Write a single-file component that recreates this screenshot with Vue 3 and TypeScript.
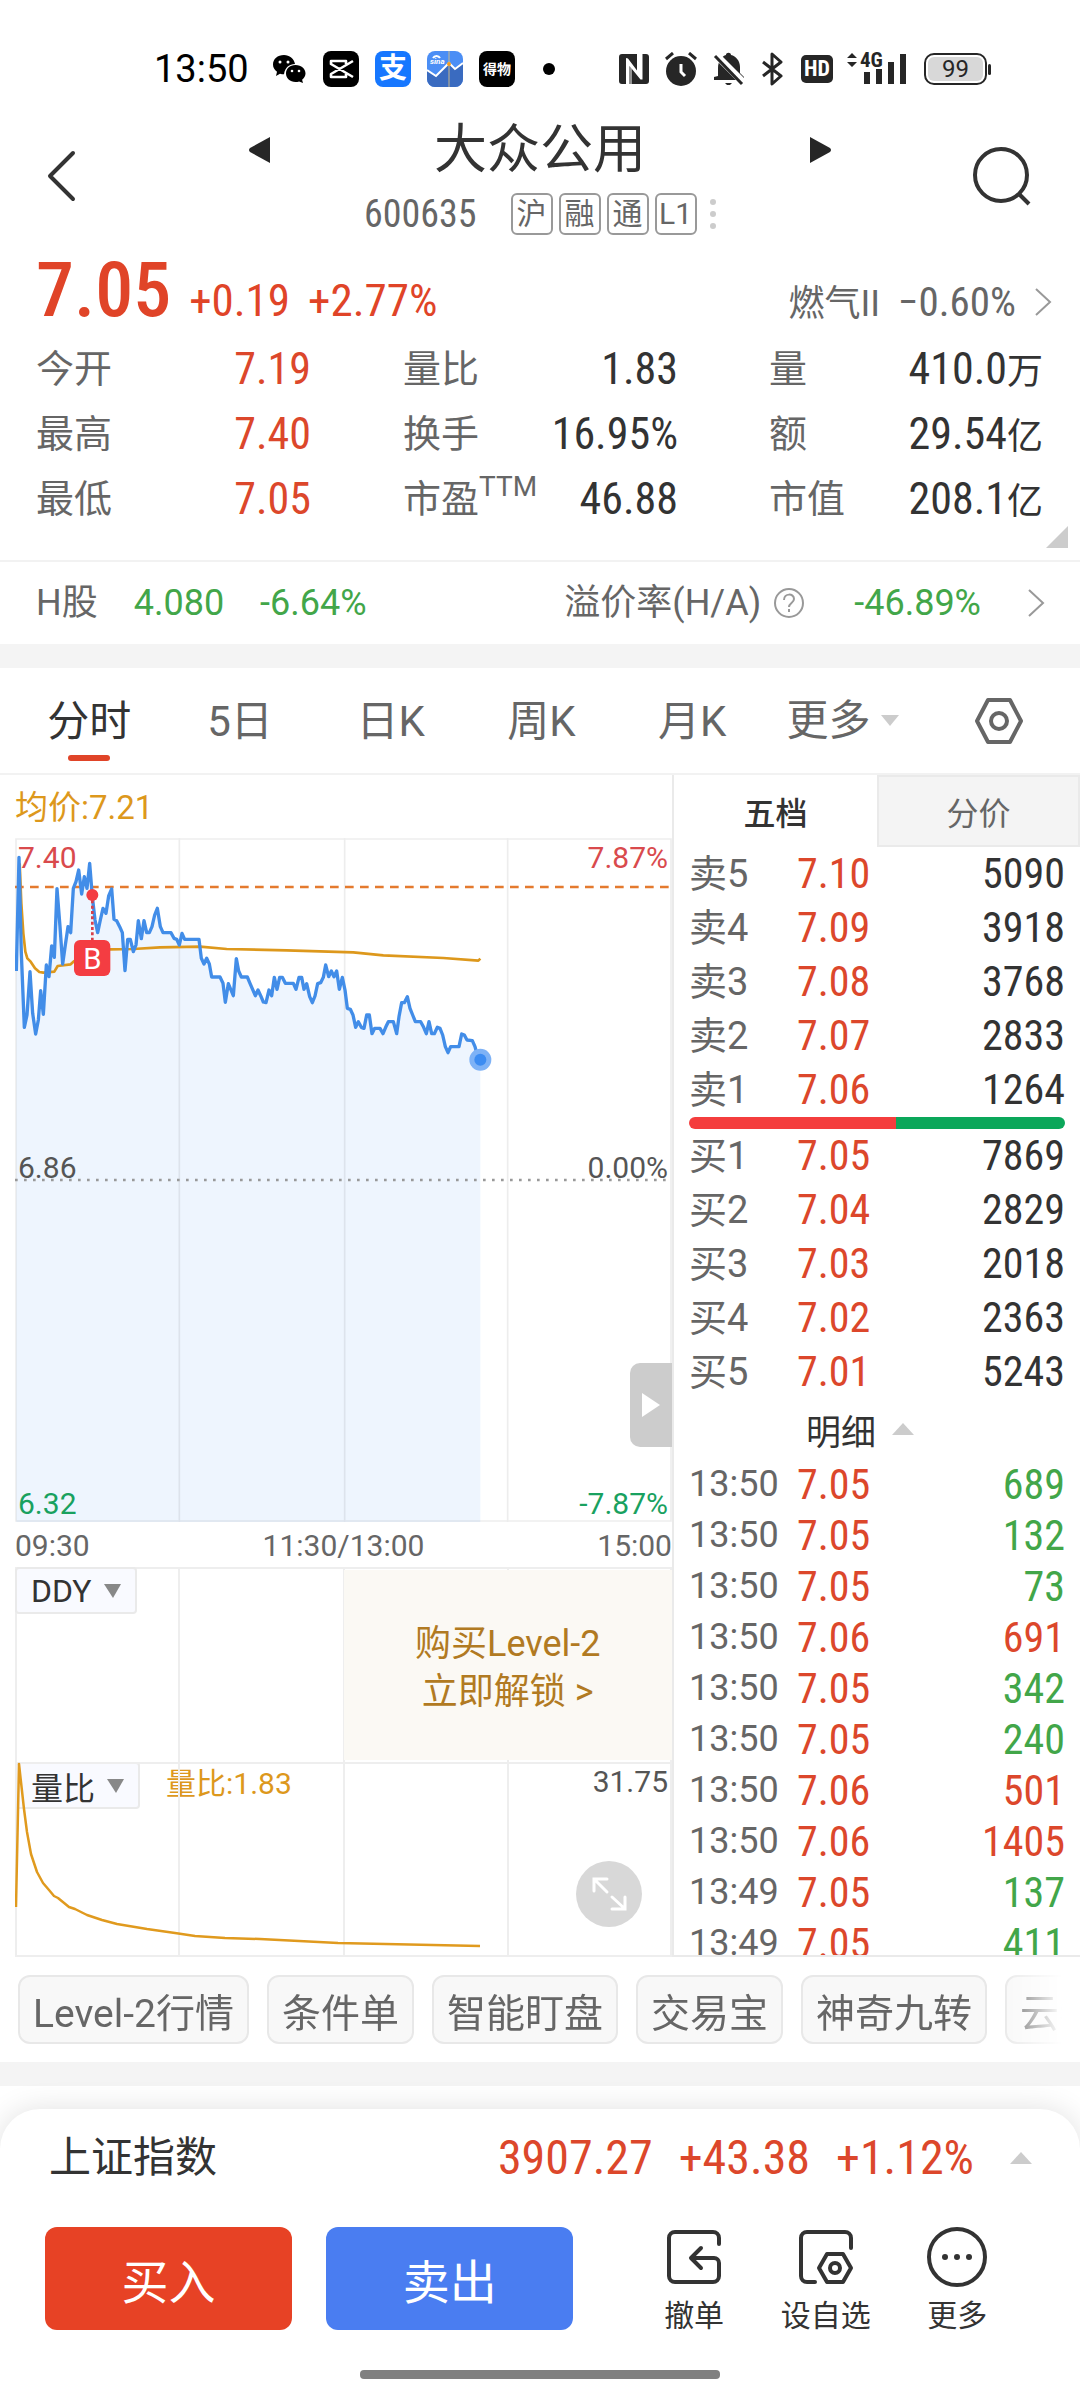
<script setup lang="ts">
interface Stat { label: string; sup?: string; value: string; unit?: string; up?: boolean }
interface Level { side: string; price: string; volume: string }
interface Tick { time: string; price: string; volume: string; up: boolean }

const stats: Stat[] = [
  { label: '今开', value: '7.19', up: true },
  { label: '量比', value: '1.83' },
  { label: '量', value: '410.0', unit: '万' },
  { label: '最高', value: '7.40', up: true },
  { label: '换手', value: '16.95%' },
  { label: '额', value: '29.54', unit: '亿' },
  { label: '最低', value: '7.05', up: true },
  { label: '市盈', sup: 'TTM', value: '46.88' },
  { label: '市值', value: '208.1', unit: '亿' },
]
const badges = ['沪', '融', '通', 'L1']
const periods = ['分时', '5日', '日K', '周K', '月K']
const asks: Level[] = [
  { side: '卖5', price: '7.10', volume: '5090' },
  { side: '卖4', price: '7.09', volume: '3918' },
  { side: '卖3', price: '7.08', volume: '3768' },
  { side: '卖2', price: '7.07', volume: '2833' },
  { side: '卖1', price: '7.06', volume: '1264' },
]
const bids: Level[] = [
  { side: '买1', price: '7.05', volume: '7869' },
  { side: '买2', price: '7.04', volume: '2829' },
  { side: '买3', price: '7.03', volume: '2018' },
  { side: '买4', price: '7.02', volume: '2363' },
  { side: '买5', price: '7.01', volume: '5243' },
]
const ticks: Tick[] = [
  { time: '13:50', price: '7.05', volume: '689', up: false },
  { time: '13:50', price: '7.05', volume: '132', up: false },
  { time: '13:50', price: '7.05', volume: '73', up: false },
  { time: '13:50', price: '7.06', volume: '691', up: true },
  { time: '13:50', price: '7.05', volume: '342', up: false },
  { time: '13:50', price: '7.05', volume: '240', up: false },
  { time: '13:50', price: '7.06', volume: '501', up: true },
  { time: '13:50', price: '7.06', volume: '1405', up: true },
  { time: '13:49', price: '7.05', volume: '137', up: false },
  { time: '13:49', price: '7.05', volume: '411', up: false },
]
const tools = ['Level-2行情', '条件单', '智能盯盘', '交易宝', '神奇九转', '云参']

const priceLine = '49,453 57,112 64,400 73,622 81,585 90,455 98,580 107,642 115,600 122,512 130,583 139,435 147,470 155,378 163,412 171,206 180,320 188,432 196,375 204,320 212,338 220,205 228,185 236,150 245,222 253,170 261,205 269,130 277,230 285,300 293,338 301,300 309,265 318,280 326,228 335,207 342,298 350,302 359,320 367,338 375,452 383,358 391,358 400,395 408,375 415,302 424,356 432,302 440,338 448,338 456,320 464,285 472,265 481,320 489,338 513,338 522,355 530,358 538,375 546,340 554,358 597,358 604,415 612,432 620,415 628,432 635,471 660,471 669,490 676,547 685,491 700,527 709,416 716,453 724,471 742,471 750,490 766,527 774,510 782,527 790,546 798,548 807,510 815,527 823,472 831,508 839,472 847,472 856,490 880,490 888,508 897,472 905,472 912,508 920,491 929,530 937,548 945,528 953,491 962,488 970,472 977,435 986,470 994,453 1002,470 1010,453 1018,508 1027,472 1035,510 1042,565 1051,568 1059,585 1067,622 1075,605 1084,622 1092,625 1100,585 1108,585 1116,641 1124,625 1140,625 1149,641 1157,622 1165,605 1180,605 1190,641 1197,590 1205,548 1213,548 1222,530 1230,565 1238,585 1246,605 1262,605 1271,622 1279,641 1287,605 1295,641 1303,641 1312,622 1320,625 1328,645 1336,680 1344,698 1352,680 1377,680 1385,642 1393,645 1401,660 1417,662 1425,680 1433,710 1441,719'
const averageLine = '59,130 64,250 70,340 76,395 82,415 92,425 105,445 118,456 130,458 163,455 173,438 212,433 222,424 280,400 330,388 400,387 480,382 600,380 680,387 860,391 1060,397 1150,406 1330,414 1435,422 1441,416'
const ratioLine = '1,145 4,2 9,47 12,70 16,92 22,110 28,121 34,128 39,134 43,136 54,145 60,147 72,153 87,158 102,162 132,167 160,171 180,174 210,176 245,177 323,181 465,184'
</script>

<template>
  <div class="page">
    <div class="status">
      <span class="clock">13:50</span>
      <div class="apps">
        <svg width="36" height="36" viewBox="0 0 36 36">
          <path d="M13 4C6.500 4 2 8 2 13.500c0 3 1.500 5.500 4 7.200L5 25l4-2.300c1.300.4 2.700.5 4 .5C14 16.500 18.500 13 24 13 23 7.500 18.500 4 13 4z" fill="#000" />
          <path d="M24.500 14C18.500 14 15 17.800 15 22.500s4 8.500 9.500 8.500c1.300 0 2.500-.2 3.600-.6L32 32l-.9-3.200C33 27.300 34.500 25 34.500 22.500 34.500 17.800 30.500 14 24.500 14z" fill="#000" />
          <g fill="#fff"><circle cx="9" cy="11" r="1.500" /><circle cx="17" cy="11" r="1.500" /><circle cx="21" cy="20" r="1.300" /><circle cx="28" cy="20" r="1.300" /></g>
        </svg>
        <svg width="36" height="36" viewBox="0 0 36 36">
          <rect width="36" height="36" rx="8" fill="#000" />
          <path d="M30 10 8 23v3h15v-3M30 26 8 13v-3h15v3" fill="none" stroke="#fff" stroke-width="2.600" stroke-linejoin="round" />
        </svg>
        <span class="app alipay">支</span>
        <svg width="36" height="36" viewBox="0 0 36 36">
          <rect width="36" height="36" rx="8" fill="#4b8ef5" />
          <path d="M0 19 9 25l13-13 6 6 8-6v16a8 8 0 0 1-8 8H8a8 8 0 0 1-8-8z" fill="#3a6bc0" />
          <path d="M0 19 9 25l13-13 6 6 8-6" fill="none" stroke="#fff" stroke-width="2" />
          <path d="M22 0v36" stroke="#c9b98c" stroke-width="1" /><circle cx="22" cy="13" r="2" fill="#f39c1f" />
          <path d="M6 7a4 4 0 0 1 7 0" fill="none" stroke="#fff" stroke-width="2" />
          <text x="3" y="13" font-size="8" font-weight="700" font-style="italic" fill="#fff">sina</text>
        </svg>
        <span class="app dewu">得物</span>
        <svg width="36" height="36" viewBox="0 0 36 36"><circle cx="18" cy="18" r="6" fill="#000" /></svg>
      </div>
      <div class="signals">
        <svg width="30" height="32" viewBox="0 0 30 32">
          <path d="M3 1h15v16.500L9 5.500 7 5v26H3a3 3 0 0 1-3-3V4a3 3 0 0 1 3-3z" fill="#262626" /><path d="M10.500 31V13l11 13.500h2V1H27a3 3 0 0 1 3 3v24a3 3 0 0 1-3 3z" fill="#262626" /><path d="M12 13v18M19 1v18" stroke="#fff" stroke-width="1" />
        </svg>
        <svg width="32" height="34" viewBox="0 0 32 34"><circle cx="16" cy="19" r="15" fill="#262626" /><path d="M1 7 8 1M31 7 24 1" stroke="#262626" stroke-width="3" /><path d="M16 12v8l4 4" fill="none" stroke="#fff" stroke-width="3" /></svg>
        <svg width="32" height="34" viewBox="0 0 32 34"><path d="M5 24V16C5 9 9 4 13 3c0-3 5-3 5 0 5 1 9 6 9 12v6l4 4v3H1v-3z" fill="#262626" /><path d="M12 31h7l-2 2h-3z" fill="#262626" /><path d="m3 3 28 28" stroke="#fff" stroke-width="7" /><path d="m2 4 27 28" stroke="#262626" stroke-width="3" /></svg>
        <svg width="24" height="34" viewBox="0 0 24 34"><path d="m2 10 18 14-9 8V2l9 8L2 24" fill="none" stroke="#262626" stroke-width="3" stroke-linejoin="round" /></svg>
        <span class="hd num">HD</span>
        <svg class="cell" width="62" height="34" viewBox="0 0 62 34">
          <path d="m6 1 5 5H1zM6 15l5-5H1z" fill="#262626" /><text class="num" x="14" y="15" font-size="21" font-weight="700" fill="#262626">4G</text>
          <path d="M21 20v12M33 17v15M45 10v22M57 2v30" stroke="#262626" stroke-width="6" />
        </svg>
        <span class="battery"><span>99</span></span>
      </div>
    </div>

    <header class="header">
      <button class="icon-btn" aria-label="返回"><svg width="40" height="52" viewBox="0 0 40 52"><path d="M33 3 10 26l23 23" fill="none" stroke="#333" stroke-width="4" stroke-linecap="round" stroke-linejoin="round" /></svg></button>
      <div class="center">
        <div class="title-row">
          <button class="icon-btn" aria-label="上一只"><svg width="22" height="28" viewBox="0 0 22 28"><path d="M22 1v26L2 16q-2-2 0-4z" fill="#262626" /></svg></button>
          <h1>大众公用</h1>
          <button class="icon-btn" aria-label="下一只"><svg width="22" height="28" viewBox="0 0 22 28"><path d="M0 1v26L20 16q2-2 0-4z" fill="#262626" /></svg></button>
        </div>
        <div class="code-row">
          <span class="code num">600635</span>
          <span v-for="b in badges" :key="b" class="badge">{{ b }}</span>
          <svg width="8" height="32" viewBox="0 0 8 32"><g fill="#ccc"><circle cx="4" cy="4" r="3" /><circle cx="4" cy="16" r="3" /><circle cx="4" cy="28" r="3" /></g></svg>
        </div>
      </div>
      <button class="icon-btn" aria-label="搜索"><svg width="60" height="60" viewBox="0 0 60 60"><circle cx="29" cy="29" r="26" fill="none" stroke="#333" stroke-width="4" /><path d="m47 48 10 10" stroke="#333" stroke-width="4" /></svg></button>
    </header>

    <section class="quote">
      <div class="price-row num">
        <strong>7.05</strong><span>+0.19</span><span>+2.77%</span>
        <a href="#" class="sector"><span class="sector-name">燃气II</span><span>−0.60%</span><svg width="18" height="28" viewBox="0 0 18 28"><path d="m2 1 14 13L2 27" fill="none" stroke="#999" stroke-width="2" /></svg></a>
      </div>
      <dl class="stats">
        <div v-for="s in stats" :key="s.label">
          <dt>{{ s.label }}<sup v-if="s.sup">{{ s.sup }}</sup></dt>
          <dd class="num" :class="{ up: s.up }">{{ s.value }}<span v-if="s.unit" class="unit">{{ s.unit }}</span></dd>
        </div>
      </dl>
      <div class="corner"><svg width="22" height="22" viewBox="0 0 22 22"><path d="M22 0v22H0z" fill="#ccc" /></svg></div>
    </section>

    <a href="#" class="hshare">
      <span>H股</span><span class="down h-price">4.080</span><span class="down">-6.64%</span>
      <span class="premium">溢价率(H/A)</span>
      <svg width="32" height="32" viewBox="0 0 32 32"><circle cx="16" cy="16" r="14" fill="none" stroke="#999" stroke-width="2" /><path d="M11 13c0-7 10-7 10-1 0 4-5 4-5 8M16 22v3" fill="none" stroke="#999" stroke-width="2" /></svg>
      <span class="down h-rate">-46.89%</span>
      <svg width="18" height="28" viewBox="0 0 18 28"><path d="m2 1 14 13L2 27" fill="none" stroke="#999" stroke-width="2" /></svg>
    </a>
    <div class="band"></div>

    <nav class="periods">
      <button v-for="(p, i) in periods" :key="p" :class="{ active: i === 0 }">{{ p }}</button>
      <button class="more">更多<svg width="18" height="11" viewBox="0 0 18 11"><path d="M0 0h18l-9 11z" fill="#ccc" /></svg></button>
      <button class="config" aria-label="设置"><svg width="48" height="48" viewBox="0 0 48 48"><path d="M13 3h22l11 21-11 21H13L2 24z" fill="none" stroke="#666" stroke-width="4" stroke-linejoin="round" /><circle cx="24" cy="24" r="8" fill="none" stroke="#666" stroke-width="4" /></svg></button>
    </nav>

    <main class="market">
      <div class="charts">
        <div class="avg">均价:7.21</div>
        <div class="plot intraday">
          <svg class="canvas" viewBox="45 54 1971 2052" preserveAspectRatio="none">
            <polygon :points="'49,2106 ' + priceLine + ' 1441,2106'" fill="#eef5fe" />
            <path d="M538 54V2106M1034 54V2106M1523 54V2106M48 57H2013V2103H48z" fill="none" stroke="#000" stroke-opacity=".07" stroke-width="5" />
            <polyline :points="averageLine" fill="none" stroke="#dd981c" stroke-width="8" stroke-linejoin="round" />
            <path d="M45 201H2016" stroke="#e47a2e" stroke-width="7" stroke-dasharray="26 19" />
            <path d="M45 1080H2016" stroke="#999" stroke-width="8" stroke-dasharray="8 19" />
            <polyline :points="priceLine" fill="none" stroke="#428de8" stroke-width="10" stroke-linejoin="round" />
            <path d="M277 225V360" stroke="#d8404a" stroke-width="8" stroke-dasharray="9 7" />
            <circle cx="277" cy="225" r="18" fill="#f43d42" />
            <rect x="222" y="360" width="109" height="108" rx="18" fill="#f43d42" />
            <text x="277" y="446" text-anchor="middle" font-size="88" fill="#fff">B</text>
            <circle cx="1441" cy="719" r="33" fill="#7eb2f6" /><circle cx="1441" cy="719" r="18" fill="#3c8cf2" />
          </svg>
          <div class="scale"><span class="hi">7.40</span><span class="hi">7.87%</span></div>
          <div class="scale mid"><span>6.86</span><span>0.00%</span></div>
          <div class="scale"><span class="lo">6.32</span><span class="lo">-7.87%</span></div>
          <button class="handle" aria-label="展开"><svg width="18" height="24" viewBox="0 0 18 24"><path d="M0 0v24l18-12z" fill="#fff" /></svg></button>
        </div>
        <div class="times"><span>09:30</span><span>11:30/13:00</span><span>15:00</span></div>
        <div class="plot sub">
          <svg class="canvas" viewBox="0 0 657 195" preserveAspectRatio="none"><path d="M164 0V195M329 0V195M493 0V195M1 195V1H656V195" fill="none" stroke="#eee" stroke-width="2" /></svg>
          <button class="picker">DDY<svg width="17" height="14" viewBox="0 0 17 14"><path d="M0 0h17l-8 14z" fill="#888" /></svg></button>
          <a href="#" class="unlock">购买Level-2<br />立即解锁 &gt;</a>
        </div>
        <div class="plot sub">
          <button class="picker">量比<svg width="17" height="14" viewBox="0 0 17 14"><path d="M0 0h17l-8 14z" fill="#888" /></svg></button>
          <span class="ratio">量比:1.83</span><span class="max">31.75</span>
          <svg class="canvas" viewBox="0 0 657 195" preserveAspectRatio="none"><path d="M164 0V195M329 0V195M493 0V195M1 1H656V194H1z" fill="none" stroke="#eee" stroke-width="2" /><polyline :points="ratioLine" fill="none" stroke="#e09a1e" stroke-width="2.500" stroke-linejoin="round" /></svg>
          <button class="expand" aria-label="全屏"><svg width="66" height="66" viewBox="0 0 66 66"><circle cx="33" cy="33" r="33" fill="#d8d8d8" /><path d="M18 30V18h13M19 19l12 12M49 36v12H36M48 47 36 36" fill="none" stroke="#fff" stroke-width="3" stroke-linecap="round" /></svg></button>
        </div>
      </div>

      <div class="book">
        <div class="book-tabs"><button class="on">五档</button><button>分价</button></div>
        <table>
          <tbody><tr v-for="l in asks" :key="l.side"><th scope="row">{{ l.side }}</th><td class="num price">{{ l.price }}</td><td class="num vol">{{ l.volume }}</td></tr></tbody>
        </table>
        <div class="balance"></div>
        <table>
          <tbody><tr v-for="l in bids" :key="l.side"><th scope="row">{{ l.side }}</th><td class="num price">{{ l.price }}</td><td class="num vol">{{ l.volume }}</td></tr></tbody>
        </table>
        <button class="detail">明细<svg width="22" height="12" viewBox="0 0 22 12"><path d="M0 12h22L11 0z" fill="#ccc" /></svg></button>
        <div class="ticks">
          <table>
            <tbody><tr v-for="(t, i) in ticks" :key="i"><th scope="row">{{ t.time }}</th><td class="num price">{{ t.price }}</td><td class="num vol" :class="t.up ? 'up' : 'down'">{{ t.volume }}</td></tr></tbody>
          </table>
        </div>
      </div>
    </main>

    <div class="tools"><button v-for="t in tools" :key="t">{{ t }}</button></div>
    <div class="band"></div>

    <footer class="sheet">
      <a href="#" class="index">
        <span class="index-name">上证指数</span><span class="num">3907.27</span><span class="num">+43.38</span><span class="num">+1.12%</span>
        <svg width="22" height="12" viewBox="0 0 22 12"><path d="M0 12h22L11 0z" fill="#ccc" /></svg>
      </a>
      <div class="actions">
        <button class="trade buy">买入</button><button class="trade sell">卖出</button>
        <button class="act"><svg width="60" height="60" viewBox="0 0 60 60"><path d="M55 17V11a6 6 0 0 0-6-6H11a6 6 0 0 0-6 6v38a6 6 0 0 0 6 6h38a6 6 0 0 0 6-6V36a5 5 0 0 0-5-5H28M37 21 27 31l10 10" fill="none" stroke="#333" stroke-width="4" stroke-linecap="round" stroke-linejoin="round" /></svg>撤单</button>
        <button class="act"><svg width="60" height="60" viewBox="0 0 60 60"><path d="M55 21V11a6 6 0 0 0-6-6H11a6 6 0 0 0-6 6v38a6 6 0 0 0 6 6h8" fill="none" stroke="#333" stroke-width="4" stroke-linecap="round" /><path d="M31 27h16l8 14-8 14H31l-8-14z" fill="none" stroke="#333" stroke-width="4" stroke-linejoin="round" /><circle cx="39" cy="41" r="5" fill="none" stroke="#333" stroke-width="4" /></svg>设自选</button>
        <button class="act"><svg width="60" height="60" viewBox="0 0 60 60"><circle cx="30" cy="30" r="28" fill="none" stroke="#333" stroke-width="4" /><g fill="#333"><circle cx="18" cy="30" r="3" /><circle cx="30" cy="30" r="3" /><circle cx="42" cy="30" r="3" /></g></svg>更多</button>
      </div>
      <div class="home"></div>
    </footer>
  </div>
</template>

<style>
body { margin: 0; background: #fff; }
</style>

<style scoped>
* { box-sizing: border-box; }
.page { font-family: Roboto, "Noto Sans CJK SC", sans-serif; color: #666; overflow: hidden; }
button { font: inherit; color: inherit; background: none; border: 0; padding: 0; margin: 0; }
a { color: inherit; text-decoration: none; }
svg { display: block; flex: none; }
.num { font-family: "Roboto Condensed", "Liberation Sans Narrow", Roboto, "Noto Sans CJK SC", sans-serif; }
.up { color: #dc472b; }
.down { color: #42a649; }

.status { display: flex; align-items: center; height: 104px; padding: 34px 93px 0 154px; }
.clock { font-size: 38px; line-height: 40px; color: #000; width: 117px; }
.apps { display: flex; gap: 16px; align-items: center; }
.app { width: 36px; height: 36px; border-radius: 8px; color: #fff; text-align: center; line-height: 36px; }
.alipay { background: #1677ff; font-size: 28px; font-weight: 700; }
.dewu { background: #000; font-size: 14px; font-weight: 700; }
.signals { display: flex; align-items: center; gap: 16px; margin-left: auto; }
.cell { overflow: visible; margin-left: -3px; }
.hd { background: #262626; color: #fff; font-size: 22px; font-weight: 700; line-height: 28px; width: 32px; border-radius: 5px; text-align: center; }
.battery { position: relative; border: 2px solid #262626; border-radius: 10px; padding: 2px; width: 63px; height: 32px; font-size: 24px; line-height: 24px; color: #262626; text-align: center; }
.battery span { display: block; background: #d8d8d8; border-radius: 6px; }
.battery::after { content: ""; position: absolute; right: -6px; top: 9px; width: 3px; height: 11px; background: #262626; border-radius: 2px; }

.header { display: flex; height: 136px; padding: 0 48px 0 40px; align-items: center; }
.icon-btn svg { margin-top: 8px; }
.center { flex: 1; padding: 0 0 0 5px; }
.title-row { display: flex; justify-content: space-between; align-items: center; padding: 0 140px 0 163px; height: 84px; }
.title-row svg { margin: 0; }
h1 { margin: 0; font-size: 53px; line-height: 84px; font-weight: 400; color: #333; }
.code-row { display: flex; align-items: center; gap: 6px; height: 44px; padding-left: 279px; }
.code { font-size: 38px; line-height: 44px; margin-right: 28px; }
.badge { border: 2px solid #999; border-radius: 6px; width: 42px; height: 42px; line-height: 38px; font-size: 30px; text-align: center; }
.code-row svg { margin-left: 6px; }

.quote { position: relative; height: 322px; padding: 0 37px 0 36px; border-bottom: 2px solid #f2f2f2; }
.price-row { display: flex; align-items: baseline; height: 97px; font-size: 45px; line-height: 100px; color: #e04428; }
.price-row strong { font-size: 76px; font-weight: 500; }
.price-row > span { margin-left: 18px; }
.sector { margin-left: auto; display: flex; align-items: baseline; gap: 18px; color: #666; margin-right: -9px; font-size: 41px; }
.sector-name { font-family: Roboto, "Noto Sans CJK SC", sans-serif; font-size: 36px; }
.stats { margin: 0; display: grid; grid-template-columns: 275fr 367fr 365fr; grid-auto-rows: 65px; }
.stats > div { display: flex; justify-content: space-between; font-size: 38px; line-height: 65px; }
.stats > div:nth-child(3n + 2) { padding-left: 92px; }
.stats > div:nth-child(3n) { padding-left: 91px; }
dt sup { font-size: 28px; line-height: 20px; vertical-align: 16px; }
dd { margin: 0; color: #333; font-size: 44px; }
dd.up { color: #dc472b; }
.unit { font-size: 36px; }
.corner { position: absolute; right: 12px; bottom: 12px; }

.hshare { display: flex; align-items: center; height: 82px; padding: 0 35px 0 36px; font-size: 36px; line-height: 82px; }
.h-price { margin: 0 36px; }
.premium { margin-left: auto; }
.hshare svg { margin-left: 12px; }
.h-rate { margin-left: 49px; }
.hshare svg:last-child { margin-left: 46px; }
.band { height: 24px; background: #f4f4f4; }

.periods { display: flex; align-items: center; height: 107px; padding-left: 14px; border-bottom: 2px solid #f2f2f2; font-size: 42px; line-height: 108px; }
.periods button { position: relative; flex: 151; height: 105px; }
.periods .active { color: #333; }
.active::after { content: ""; position: absolute; left: 50%; bottom: 12px; width: 42px; height: 6px; margin-left: -21px; border-radius: 3px; background: #e04428; }
.periods .more { display: flex; align-items: center; justify-content: center; gap: 11px; }
.periods .config { display: flex; flex: 162; align-items: center; justify-content: center; }

.market { display: grid; grid-template-columns: minmax(0, 674fr) minmax(0, 406fr); }
.charts { border-right: 2px solid #eaeaea; padding-left: 15px; font-size: 30px; }
.avg { height: 63px; line-height: 66px; font-size: 33px; color: #dd981c; }
.plot { position: relative; }
.canvas { position: absolute; inset: 0; width: 100%; height: 100%; }
.intraday { height: 684px; display: flex; flex-direction: column; justify-content: space-between; padding-top: 2px; }
.scale { position: relative; display: flex; justify-content: space-between; line-height: 36px; padding: 0 4px 0 3px; }
.scale.mid { color: #555; margin-bottom: 26px; }
.hi { color: #d94a4d; }
.lo { color: #19a15f; }
.handle { position: absolute; right: 0; bottom: 75px; width: 42px; height: 84px; background: #ccc; border-radius: 10px 0 0 10px; display: flex; align-items: center; justify-content: center; }
.times { display: flex; justify-content: space-between; line-height: 47px; height: 45px; }
.sub { height: 195px; display: flex; align-items: flex-start; }
.picker { position: relative; display: flex; align-items: center; gap: 12px; height: 47px; padding: 0 14px; background: #f9faff; border: 2px solid #eaeaea; border-radius: 4px; font-size: 32px; color: #333; }
.unlock { position: relative; width: 50%; height: 190px; margin: 3px 0 0 auto; padding-top: 50px; background: #fbf9f4; color: #b17a22; font-size: 36px; line-height: 48px; text-align: center; }
.ratio { margin-left: 26px; line-height: 43px; color: #dd981c; }
.max { margin-left: auto; margin-right: 4px; line-height: 39px; color: #555; }
.expand { position: absolute; right: 30px; bottom: 30px; }

.book { border-bottom: 2px solid #eaeaea; }
.book-tabs { display: flex; height: 72px; font-size: 32px; }
.book-tabs button { flex: 1; background: #f4f4f4; border: 2px solid #eaeaea; }
.book-tabs .on { background: #fff; border-color: transparent; color: #333; font-weight: 500; }
table { width: 100%; border-collapse: collapse; table-layout: fixed; }
th, td { padding: 0; height: 54px; line-height: 54px; font-size: 42px; text-align: left; }
th { width: 123px; padding-left: 15px; font-size: 38px; font-weight: 400; }
.price { color: #dc472b; }
.vol { color: #333; text-align: right; padding-right: 15px; }
.vol.up { color: #dc472b; }
.vol.down { color: #42a649; }
.balance { height: 12px; margin: 0 15px; border-radius: 6px; background: linear-gradient(90deg, #f43d3d 55%, #0ba75a 55%); }
.detail { display: flex; width: 100%; height: 60px; align-items: center; justify-content: center; gap: 16px; font-size: 35px; color: #333; padding-right: 34px; }
.ticks { height: 496px; overflow: hidden; }
.ticks th, .ticks td { height: 51px; line-height: 51px; }
.ticks th { font-size: 36px; }

.tools { display: flex; gap: 18px; padding: 18px 0; margin: 0 18px; overflow: hidden; mask-image: linear-gradient(90deg, #000 94%, transparent); }
.tools button { flex: none; height: 69px; padding: 0 13px; border: 2px solid #e8e8e8; border-radius: 12px; background: #f8f8f8; font-size: 39px; }

.sheet { position: relative; margin-top: 23px; background: #fff; border-radius: 40px 40px 0 0; box-shadow: 0 0 30px rgba(0, 0, 0, .12); padding-bottom: 21px; }
.index { display: flex; align-items: center; height: 98px; padding: 0 48px 0 49px; color: #dc472b; font-size: 48px; line-height: 98px; }
.index-name { margin-right: auto; font-size: 42px; color: #333; }
.index .num { margin-left: 26px; }
.index svg { margin-left: 36px; }
.actions { display: flex; align-items: flex-start; padding: 20px 57px 0 45px; height: 163px; }
.trade { flex: 248; height: 103px; border-radius: 12px; color: #fff; font-size: 47px; }
.buy { background: #e74225; margin-right: 34px; }
.sell { background: #4a7df1; margin-right: 55px; }
.act { flex: 132; display: flex; flex-direction: column; align-items: center; font-size: 30px; line-height: 36px; color: #333; gap: 11px; }
.home { width: 360px; height: 9px; margin: 0 auto; border-radius: 4px; background: #808080; }
</style>
